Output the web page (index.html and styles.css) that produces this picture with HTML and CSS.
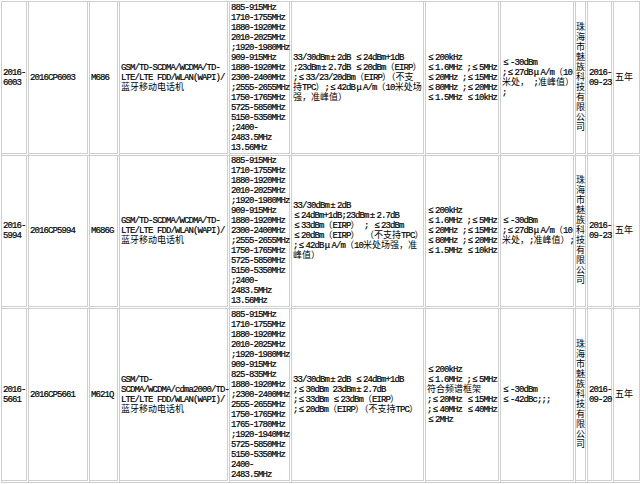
FILE: index.html
```html
<!DOCTYPE html>
<html lang="zh-CN">
<head>
<meta charset="utf-8">
<title>型号核准</title>
<link rel="stylesheet" href="styles.css">
</head>
<body>
<div class="tbl">
  <div class="cell"><div>2016-<br>6003</div></div>
  <div class="cell"><div>2016CP6003</div></div>
  <div class="cell"><div>M686</div></div>
  <div class="cell"><div>GSM/TD-SCDMA/WCDMA/TD-<br>LTE/LTE FDD/WLAN(WAPI)/<br><span class="c">蓝牙移动电话机</span></div></div>
  <div class="cell"><div>885-915MHz<br>1710-1755MHz<br>1880-1920MHz<br>2010-2025MHz<br>;1920-1980MHz<br>909-915MHz<br>1880-1920MHz<br>2300-2400MHz<br>;2555-2655MHz<br>1750-1765MHz<br>5725-5850MHz<br>5150-5350MHz<br>;2400-<br>2483.5MHz<br>13.56MHz</div></div>
  <div class="cell clip"><div>33/30dBm<span class="f">±</span>2dB <span class="f">≤</span>24dBm+1dB<br>;23dBm<span class="f">±</span>2.7dB <span class="f">≤</span>20dBm<span class="c">（</span>EIRP<span class="c">）</span><br>;<span class="f">≤</span>33/23/20dBm<span class="c">（</span>EIRP<span class="c">）（不支</span><br><span class="c">持</span>TPC<span class="c">）</span>;<span class="f">≤</span>42dB<span class="f">μ</span>A/m<span class="c">（</span>10<span class="c">米处场</span><br><span class="c">强，准峰值）</span></div></div>
  <div class="cell"><div><span class="f">≤</span>200kHz<br><span class="f">≤</span>1.6MHz ;<span class="f">≤</span>5MHz<br><span class="f">≤</span>20MHz ;<span class="f">≤</span>15MHz<br><span class="f">≤</span>80MHz ;<span class="f">≤</span>20MHz<br><span class="f">≤</span>1.5MHz <span class="f">≤</span>10kHz</div></div>
  <div class="cell"><div><span class="f">≤</span>-30dBm<br>;<span class="f">≤</span>27dB<span class="f">μ</span>A/m<span class="c">（</span>10<br><span class="c">米处，</span> ;<span class="c">准峰值）</span><br>;</div></div>
  <div class="cell co"><div class="c">珠<br>海<br>市<br>魅<br>族<br>科<br>技<br>有<br>限<br>公<br>司</div></div>
  <div class="cell"><div>2016-<br>09-23</div></div>
  <div class="cell"><div class="c">五年</div></div>

  <div class="cell"><div>2016-<br>5994</div></div>
  <div class="cell"><div>2016CP5994</div></div>
  <div class="cell"><div>M686G</div></div>
  <div class="cell"><div>GSM/TD-SCDMA/WCDMA/TD-<br>LTE/LTE FDD/WLAN(WAPI)/<br><span class="c">蓝牙移动电话机</span></div></div>
  <div class="cell"><div>885-915MHz<br>1710-1755MHz<br>1880-1920MHz<br>2010-2025MHz<br>;1920-1980MHz<br>909-915MHz<br>1880-1920MHz<br>2300-2400MHz<br>;2555-2655MHz<br>1750-1765MHz<br>5725-5850MHz<br>5150-5350MHz<br>;2400-<br>2483.5MHz<br>13.56MHz</div></div>
  <div class="cell clip"><div>33/30dBm<span class="f">±</span>2dB<br><span class="f">≤</span>24dBm+1dB;23dBm<span class="f">±</span>2.7dB<br><span class="f">≤</span>33dBm<span class="c">（</span>EIRP<span class="c">）</span> ; <span class="f">≤</span>23dBm<br><span class="f">≤</span>20dBm<span class="c">（</span>EIRP<span class="c">） （不支持</span>TPC<span class="c">）</span><br>;<span class="f">≤</span>42dB<span class="f">μ</span>A/m<span class="c">（</span>10<span class="c">米处场强，准</span><br><span class="c">峰值）</span></div></div>
  <div class="cell"><div><span class="f">≤</span>200kHz<br><span class="f">≤</span>1.6MHz ;<span class="f">≤</span>5MHz<br><span class="f">≤</span>20MHz ;<span class="f">≤</span>15MHz<br><span class="f">≤</span>80MHz ;<span class="f">≤</span>20MHz<br><span class="f">≤</span>1.5MHz <span class="f">≤</span>10kHz</div></div>
  <div class="cell"><div><span class="f">≤</span>-30dBm<br>;<span class="f">≤</span>27dB<span class="f">μ</span>A/m<span class="c">（</span>10<br><span class="c">米处，</span>;<span class="c">准峰值）</span>;</div></div>
  <div class="cell co"><div class="c">珠<br>海<br>市<br>魅<br>族<br>科<br>技<br>有<br>限<br>公<br>司</div></div>
  <div class="cell"><div>2016-<br>09-23</div></div>
  <div class="cell"><div class="c">五年</div></div>

  <div class="cell"><div>2016-<br>5661</div></div>
  <div class="cell"><div>2016CP5661</div></div>
  <div class="cell"><div>M621Q</div></div>
  <div class="cell"><div>GSM/TD-<br>SCDMA/WCDMA/cdma2000/TD-<br>LTE/LTE FDD/WLAN(WAPI)/<br><span class="c">蓝牙移动电话机</span></div></div>
  <div class="cell"><div>885-915MHz<br>1710-1755MHz<br>1880-1920MHz<br>2010-2025MHz<br>;1920-1980MHz<br>909-915MHz<br>825-835MHz<br>1880-1920MHz<br>;2300-2400MHz<br>2555-2655MHz<br>1750-1765MHz<br>1765-1780MHz<br>;1920-1940MHz<br>5725-5850MHz<br>5150-5350MHz<br>2400-<br>2483.5MHz</div></div>
  <div class="cell clip"><div>33/30dBm<span class="f">±</span>2dB <span class="f">≤</span>24dBm+1dB<br>;<span class="f">≤</span>30dBm 23dBm<span class="f">±</span>2.7dB<br>;<span class="f">≤</span>33dBm <span class="f">≤</span>23dBm<span class="c">（</span>EIRP<span class="c">）</span><br>;<span class="f">≤</span>20dBm<span class="c">（</span>EIRP<span class="c">）（不支持</span>TPC<span class="c">）</span></div></div>
  <div class="cell"><div><span class="f">≤</span>200kHz<br><span class="f">≤</span>1.6MHz ;<span class="f">≤</span>5MHz<br><span class="c">符合频谱框架</span><br>;<span class="f">≤</span>20MHz <span class="f">≤</span>15MHz<br>;<span class="f">≤</span>40MHz <span class="f">≤</span>40MHz<br><span class="f">≤</span>2MHz</div></div>
  <div class="cell"><div><span class="f">≤</span>-30dBm<br><span class="f">≤</span>-42dBc;;;</div></div>
  <div class="cell co"><div class="c">珠<br>海<br>市<br>魅<br>族<br>科<br>技<br>有<br>限<br>公<br>司</div></div>
  <div class="cell"><div>2016-<br>09-20</div></div>
  <div class="cell"><div class="c">五年</div></div>
</div>
</body>
</html>
```
FILE: styles.css
```css
html, body {
  margin: 0;
  padding: 0;
  background: #ffffff;
  overflow: hidden;
}

.tbl {
  display: grid;
  grid-template-columns: 27px 61px 30px 110px 62px 134px 75px 75px 12px 26px 28px;
  grid-template-rows: 154px 153px 174px;
  width: max-content;
  margin: -1px 0 0 -1px;
  border-top: 3px double #cfcfcf;
  border-left: 3px double #cfcfcf;
  font-family: "Liberation Mono", "Noto Sans CJK SC", monospace;
  font-size: 9px;
  line-height: 10px;
  letter-spacing: -0.9px;
  color: #000000;
  -webkit-text-stroke: 0.2px #000000;
}

.cell {
  box-sizing: border-box;
  display: flex;
  align-items: center;
  min-width: 0;
  padding: 0 0 0 1px;
  border-right: 3px double #cfcfcf;
  border-bottom: 3px double #cfcfcf;
  white-space: nowrap;
}

.cell.clip {
  overflow: hidden;
}

.cell.co {
  padding: 0;
}

.c {
  letter-spacing: 0;
  -webkit-text-stroke: 0;
}

.f {
  display: inline-block;
  width: 8px;
  text-align: center;
  letter-spacing: 0;
}
```
